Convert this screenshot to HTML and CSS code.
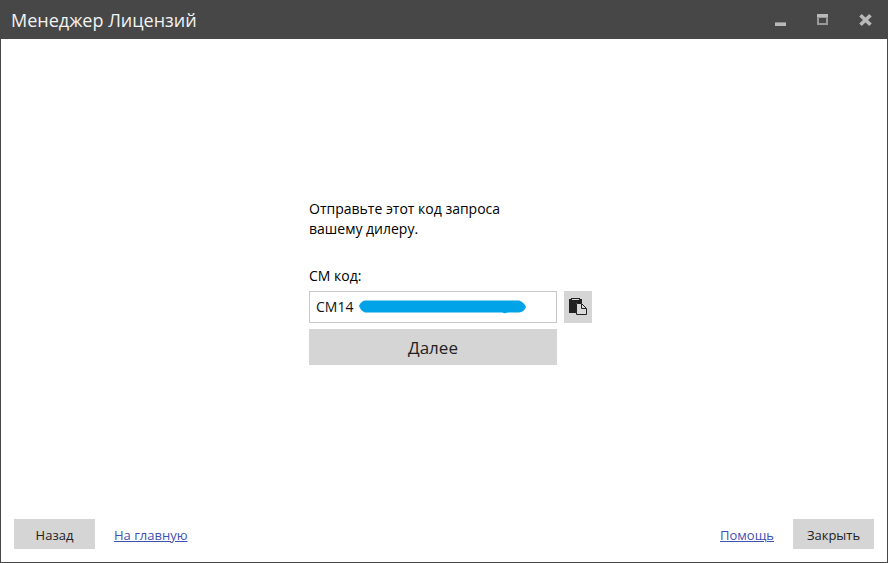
FILE: index.html
```html
<!DOCTYPE html>
<html lang="ru">
<head>
    <meta charset="UTF-8">
    <meta name="viewport" content="width=device-width, initial-scale=1.0">
    <title>Менеджер Лицензий</title>
    <link rel="stylesheet" href="styles.css">
</head>
<body>
    <div class="window">
        <header class="titlebar">
            <h1 class="title">Менеджер Лицензий</h1>
            <div class="controls">
                <button type="button" class="control" aria-label="Свернуть">
                    <svg width="14" height="14" viewBox="0 0 14 14"><path fill="#b9b9b9" d="M2 9h11v4H2z"/><path fill="#8c8c8c" d="M2 9h11v1H2z"/></svg>
                </button>
                <button type="button" class="control" aria-label="Развернуть">
                    <svg width="14" height="14" viewBox="0 0 14 14"><path fill="#999" fill-rule="evenodd" d="M1 1h11v11H1zM3 5v5h7V5z"/><path fill="#b9b9b9" d="M1 1h11v3H1z"/></svg>
                </button>
                <button type="button" class="control" aria-label="Закрыть окно">
                    <svg width="14" height="14" viewBox="0 0 14 14"><path stroke="#b9b9b9" stroke-width="3.600" d="M1.500 2.200l10 9.600M11.500 2.200l-10 9.600"/></svg>
                </button>
            </div>
        </header>

        <main class="content">
            <form class="request">
                <p class="hint">Отправьте этот код запроса вашему дилеру.</p>
                <label class="label" for="cmCode">СМ код:</label>
                <div class="field">
                    <input type="text" class="code" id="cmCode" value="CM14" readonly>
                    <!-- скрытая часть кода -->
                    <svg class="mask" width="169" height="14" viewBox="0 0 169 14"><path fill="#00a2e8" d="M7 .5H161Q166 2 168 7 166 12 161 12.500L150 12.600 147 13.300 144 12.500H7Q3 11 1 6 3 1 7 .5z"/></svg>
                </div>
                <button type="button" class="copy" aria-label="Скопировать код">
                    <svg width="18" height="18" viewBox="0 0 18 18">
                        <path fill="#222" d="M0 1h2V0h9v1h2v4H7v10H0z"/>
                        <path fill="#d5d5d5" d="M3 1h7v1H3z"/>
                        <path fill="#d9d9d9" stroke="#222" d="M7.500 5.500h5l5 5v6h-10z"/>
                        <path fill="none" stroke="#222" d="M12.500 5.500v5h5"/>
                    </svg>
                </button>
                <button type="button" class="next">Далее</button>
            </form>
        </main>

        <footer class="footer">
            <button type="button" class="btn">Назад</button>
            <a href="#" class="link">На главную</a>
            <a href="#" class="link help">Помощь</a>
            <button type="button" class="btn">Закрыть</button>
        </footer>
    </div>
</body>
</html>
```

FILE: styles.css
```css
*{
    box-sizing: border-box;
}
body{
    margin: 0;
    font-family: "Open Sans", "Noto Sans", sans-serif;
    font-size: 14px;
    line-height: 20px;
    color: #000;
}
button, input{
    margin: 0;
    padding: 0;
    border: 0;
    border-radius: 0;
    font-family: inherit;
    color: #222;
}
button{
    background: #d5d5d5;
    cursor: pointer;
}
svg{
    display: block;
}
.window{
    display: flex;
    flex-direction: column;
    min-height: 100vh;
    border: 1px solid #474747;
    background: #fff;
}
.titlebar{
    display: flex;
    align-items: center;
    justify-content: space-between;
    height: 38px;
    padding: 0 14px 0 10px;
    background: #474747;
}
.title{
    margin: 0;
    font-size: 18px;
    font-weight: 400;
    line-height: 24px;
    color: #f2f2f2;
}
.controls{
    display: flex;
    gap: 29px;
}
.control{
    background: none;
}
.content{
    flex: 1;
    display: flex;
    align-items: center;
    justify-content: center;
    padding: 6px 0 0 13px;
}
.request{
    display: grid;
    grid-template-columns: 248px 28px;
    column-gap: 7px;
}
.hint{
    grid-column: 1;
    width: 220px;
    margin: 0 0 27px;
}
.label{
    grid-column: 1;
    margin-bottom: 5px;
}
.field{
    grid-column: 1;
    position: relative;
    height: 32px;
}
.code{
    width: 100%;
    height: 100%;
    padding: 0 6px 2px;
    border: 1px solid #c8c8c8;
    background: #fff;
    font-size: 14px;
    color: #111;
}
.mask{
    position: absolute;
    left: 49px;
    top: 9px;
}
.copy{
    display: flex;
    align-items: center;
    justify-content: center;
}
.next{
    grid-column: 1;
    height: 36px;
    margin-top: 6px;
    font-size: 17px;
}
.footer{
    display: flex;
    align-items: center;
    gap: 19px;
    padding: 0 13px 13px;
}
.btn{
    width: 81px;
    height: 30px;
    padding-top: 2px;
    font-size: 13px;
}
.link{
    padding-top: 2px;
    font-size: 13px;
    color: #3f51b5;
}
.help{
    margin-left: auto;
}
```
